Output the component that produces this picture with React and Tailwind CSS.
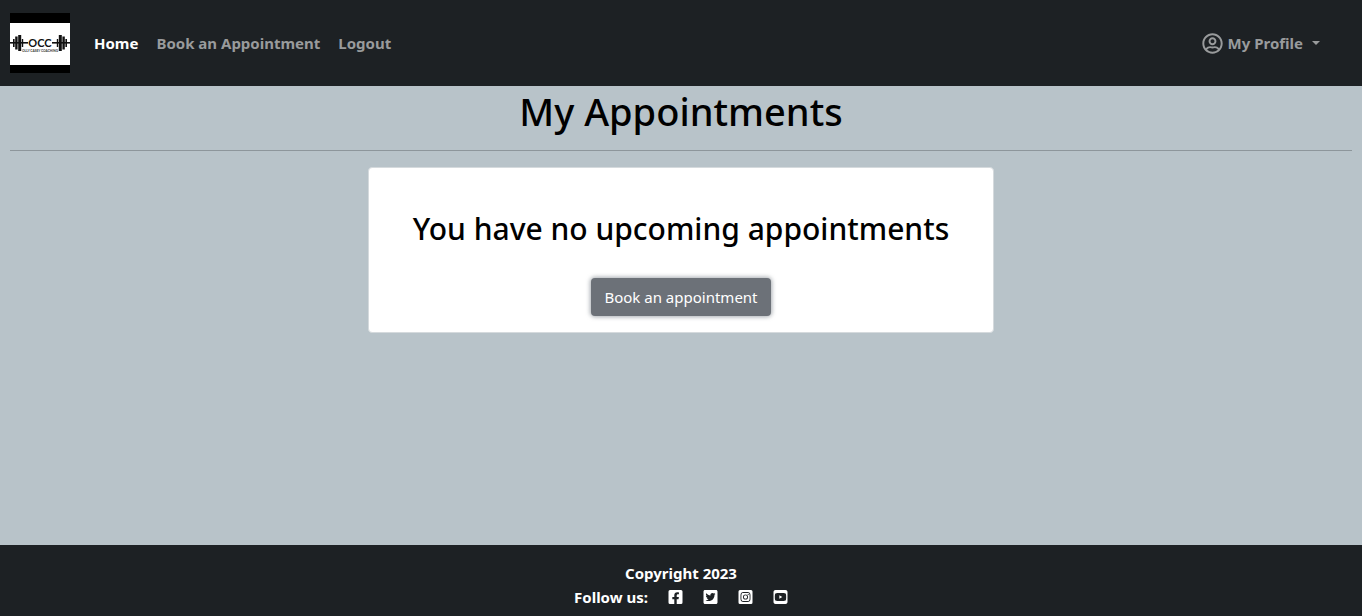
import { FaRegUserCircle, FaFacebookSquare, FaTwitterSquare, FaInstagramSquare } from "react-icons/fa";
import { FaSquareYoutube } from "react-icons/fa6";

function Logo() {
  return (
    <svg viewBox="0 0 60 60" className="size-[60px]" role="img" aria-label="Olly Casey Coaching">
      <rect width="60" height="60" fill="#000" />
      <rect y="10" width="60" height="42" fill="#fff" />
      <g fill="#111">
        <rect y="29" width="18" height="1.6" />
        <rect x="42" y="29" width="18" height="1.6" />
        <rect x="3" y="26" width="1.6" height="8" />
        <rect x="5.2" y="23.5" width="2.4" height="13" />
        <rect x="8.2" y="22" width="3" height="16" />
        <rect x="11.8" y="26" width="1.4" height="8" />
        <rect x="46.8" y="26" width="1.4" height="8" />
        <rect x="48.8" y="22" width="3" height="16" />
        <rect x="52.4" y="23.5" width="2.4" height="13" />
        <rect x="55.4" y="26" width="1.6" height="8" />
      </g>
      <text x="30" y="34" textAnchor="middle" fontFamily="Lato, sans-serif" fontWeight="700" fontSize="11" fill="#111">OCC</text>
      <text x="30" y="39" textAnchor="middle" fontFamily="Lato, sans-serif" fontWeight="700" fontSize="3.2" fill="#333">OLLY CASEY COACHING</text>
    </svg>
  );
}

const socials = [
  { label: "Facebook", Icon: FaFacebookSquare },
  { label: "Twitter", Icon: FaTwitterSquare },
  { label: "Instagram", Icon: FaInstagramSquare },
  { label: "YouTube", Icon: FaSquareYoutube },
];

export default function App() {
  return (
    <div className="flex min-h-screen flex-col bg-[#b8c3c9] font-['Segoe_UI','Noto_Sans',sans-serif] text-base text-black">
      <header className="flex items-center bg-[#1d2124] py-[13px] pr-[42px] pl-[10px] font-bold text-[#999b9c]">
        <a href="#home" className="mr-6"><Logo /></a>
        <nav className="flex flex-1 items-center gap-[18px] text-[15px]">
          <a href="#home" className="text-white">Home</a>
          <a href="#book">Book an Appointment</a>
          <a href="#logout">Logout</a>
          <button type="button" className="ml-auto flex items-center gap-[5px]">
            <FaRegUserCircle className="size-[21px]" aria-hidden="true" />
            My Profile
            <span className="ml-1 border-x-4 border-t-4 border-x-transparent border-t-current" />
          </button>
        </nav>
      </header>

      <main className="flex flex-1 flex-col items-center px-[10px]">
        <h1 className="text-[38px] leading-[50px] font-medium">My Appointments</h1>
        <hr className="mt-[14px] mb-4 w-full border-[#8d969b]" />
        <section className="flex flex-col items-center rounded border border-[#d5dadd] bg-white px-11 pt-[41px] pb-4">
          <h2 className="text-[30px] leading-[40px] font-medium">You have no upcoming appointments</h2>
          <a href="#book" className="mt-[29px] rounded bg-[#6c7178] px-[13px] py-[7px] text-[15px] leading-6 text-white shadow-[0_0_4px_1px_rgba(108,117,125,0.6)]">
            Book an appointment
          </a>
        </section>
      </main>

      <footer className="flex flex-col items-center bg-[#1d2124] pt-4 pb-[7px] text-[15px] leading-6 font-bold text-white">
        <p>Copyright 2023</p>
        <div className="flex items-center gap-5">
          <p>Follow us:</p>
          {socials.map(({ label, Icon }) => (
            <a key={label} href={"#" + label.toLowerCase()} aria-label={label}>
              <Icon className="h-4 w-[15px]" />
            </a>
          ))}
        </div>
      </footer>
    </div>
  );
}
